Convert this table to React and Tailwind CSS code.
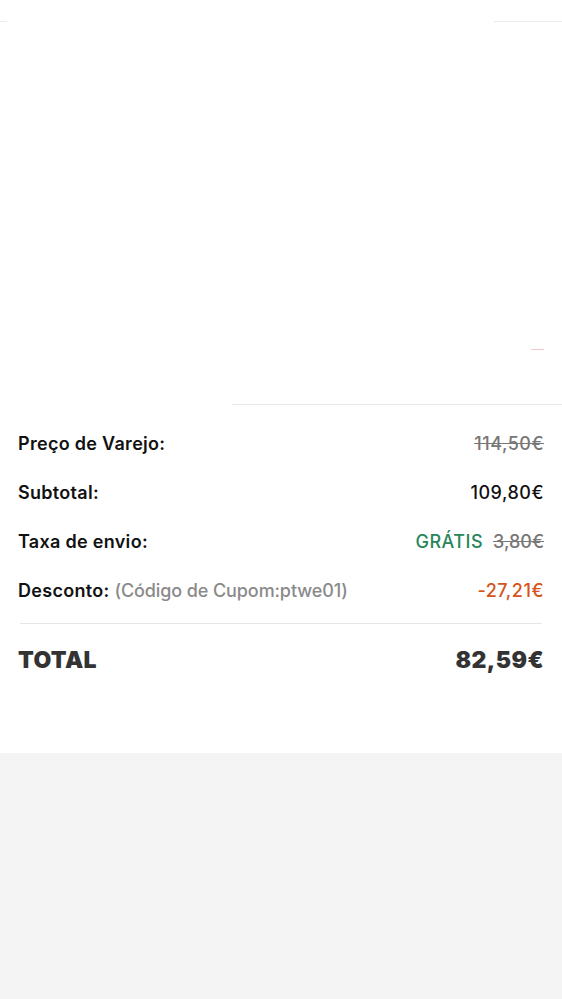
import React from "react";

const Row = ({ label, children }) => (
  <div className="flex items-center justify-between h-[49px]">
    <div className="text-[18px] font-semibold tracking-[0.3px] text-[#111]">{label}</div>
    <div className="flex items-center gap-[10px] text-[18px] font-medium tracking-[0.5px]">{children}</div>
  </div>
);

const App = () => {
  return (
    <div className="w-[562px] min-h-[999px] bg-[#f4f4f4]" style={{ fontFamily: "Inter, 'Noto Sans', sans-serif" }}>
      <div className="bg-white">
        {/* faded product area */}
        <div className="h-[405px] flex flex-col">
          <div className="flex justify-between pt-[21px]">
            <div className="w-[7px] h-px bg-[#ececec]"></div>
            <div className="w-[68px] h-px bg-[#ececec]"></div>
          </div>
          <div className="flex-1"></div>
          <div className="flex justify-end pb-[54px]">
            <div className="w-[13px] h-px bg-[#f3c7c7] mr-[18px]"></div>
          </div>
          <div className="ml-[232px] h-px bg-[#e8e8e8]"></div>
        </div>

        <div className="px-[18px] pt-[14px]">
          <Row label="Preço de Varejo:">
            <span className="text-[#777] line-through">114,50€</span>
          </Row>
          <Row label="Subtotal:">
            <span className="text-[#111]">109,80€</span>
          </Row>
          <Row label="Taxa de envio:">
            <span className="text-[#26855b]">GRÁTIS</span>
            <span className="text-[#777] line-through tracking-[0px]">3,80€</span>
          </Row>
          <Row
            label={
              <span>
                Desconto: <span className="text-[#8a8a8a] font-medium tracking-[-0.1px]">(Código de Cupom:ptwe01)</span>
              </span>
            }
          >
            <span className="text-[#d5541c]">-27,21€</span>
          </Row>
          <div className="mx-[2px] mt-[8px] h-px bg-[#e6e6e6]"></div>
          <div className="flex items-center justify-between h-[72px] text-[23px] font-black tracking-[0.4px] text-[#333]">
            <span>TOTAL</span>
            <span>82,59€</span>
          </div>
          <div className="h-[57px]"></div>
        </div>
      </div>
    </div>
  );
};

export default App;
